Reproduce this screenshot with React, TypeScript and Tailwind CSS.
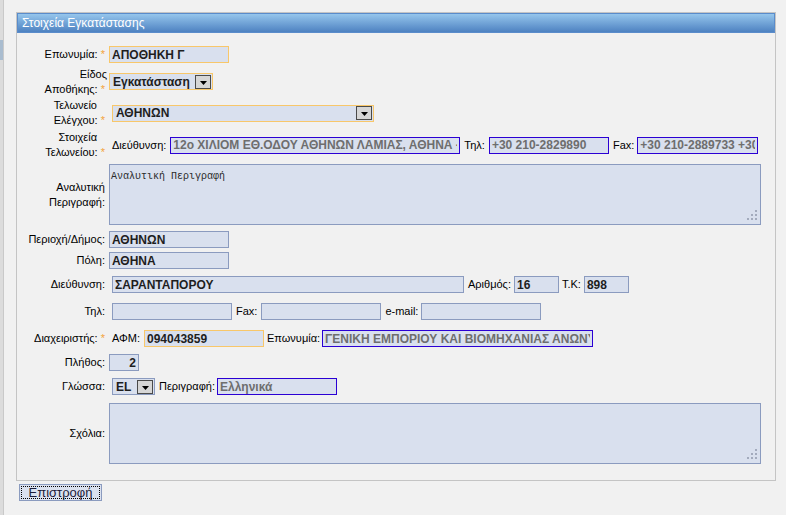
import clsx from "clsx"

type Tone = "gray" | "orange" | "blue"

const borders: Record<Tone, string> = {
  gray: "border-[#8b9bbf]",
  orange: "border-[#f8c76a]",
  blue: "border-[#2b00d4]",
}

function Star() {
  return <span className="text-[#f3a33b]"> *</span>
}

function Field({ w, value = "", tone = "gray", ro = false, right = false }: { w: string; value?: string; tone?: Tone; ro?: boolean; right?: boolean }) {
  return (
    <input
      readOnly
      value={value}
      className={clsx(
        "h-[17px] shrink-0 border bg-[#d9e0ee] px-[2px] text-[12px] font-bold outline-none",
        w,
        borders[tone],
        ro ? "text-[#6e6e6e]" : "text-[#1e1e1e]",
        right && "text-right"
      )}
    />
  )
}

function Arrow() {
  return (
    <div className="flex h-[14px] w-[16px] shrink-0 items-end justify-center border border-[#4a4a4a] bg-[#d6d6d6] pb-[3px]">
      <svg width="7" height="4" viewBox="0 0 7 4">
        <path d="M0 0h7L3.5 4z" fill="#000" />
      </svg>
    </div>
  )
}

function Select({ w, value, tone = "gray" }: { w: string; value: string; tone?: Tone }) {
  return (
    <div className={clsx("flex h-[17px] shrink-0 items-center justify-between border bg-[#d9e0ee] pl-[3px] pr-[1px]", w, borders[tone])}>
      <span className="text-[12px] font-bold text-[#1e1e1e]">{value}</span>
      <Arrow />
    </div>
  )
}

function Grip() {
  return (
    <svg className="absolute bottom-[3px] right-[2px]" width="11" height="11" viewBox="0 0 11 11">
      {[
        [8, 0],
        [4, 4],
        [8, 4],
        [0, 8],
        [4, 8],
        [8, 8],
      ].map(([x, y], i) => (
        <rect key={i} x={x} y={y} width="2" height="2" fill="#a3abbd" />
      ))}
    </svg>
  )
}

function Area({ text }: { text?: string }) {
  return (
    <div className="relative h-[61px] w-[652px] shrink-0 border border-[#8b9bbf] bg-[#d9e0ee] px-[1px] pt-[2px]">
      {text && <span className="font-['Liberation_Mono',monospace] text-[10px] leading-[12px] text-[#2a2a2a]">{text}</span>}
      <Grip />
    </div>
  )
}

function Label({ children }: { children: React.ReactNode }) {
  return <div className="w-[88px] shrink-0 text-right leading-[15px]">{children}</div>
}

export default function App() {
  return (
    <div className="flex min-h-[515px] bg-[#f1f1f1] font-['Liberation_Sans',Arial,sans-serif] text-[11px] text-black">
      {/* edge of the window behind */}
      <div className="flex w-[4px] shrink-0 flex-col border-r border-[#c9c9c9] bg-[#dcdcdc]">
        <div className="mt-[40px] h-[20px] bg-[#a9bccf]" />
      </div>

      <div className="flex flex-col">
        <div className="ml-[12px] mt-[12px] flex h-[469px] w-[760px] flex-col border border-[#c4c4c4]">
          <div className="flex h-[20px] items-center border border-[#5a8ccb] bg-linear-to-b from-[#96c6ec] to-[#4e82c1] pl-[4px] text-[12px] text-white">
            Στοιχεία Εγκατάστασης
          </div>

          <div className="flex flex-col">
            <div className="mt-[13px] flex h-[17px] items-center gap-[4px]">
              <Label>
                Επωνυμία:<Star />
              </Label>
              <Field w="w-[120px]" value="ΑΠΟΘΗΚΗ Γ" tone="orange" />
            </div>

            <div className="mt-[3px] flex h-[31px] items-center gap-[4px]">
              <Label>
                <span className="-mr-[2px] block">Είδος</span>
                Αποθήκης:<Star />
              </Label>
              <Select w="w-[104px]" value="Εγκατάσταση" tone="orange" />
            </div>

            <div className="mt-[1px] flex h-[30px] items-center gap-[4px]">
              <Label>
                <span className="block pr-[8px]">Τελωνείο</span>
                Ελέγχου:<Star />
              </Label>
              <div className="ml-[3px]">
                <Select w="w-[262px]" value="ΑΘΗΝΩΝ" tone="orange" />
              </div>
            </div>

            <div className="mt-[2px] flex h-[30px] items-center gap-[4px]">
              <Label>
                <span className="block pr-[8px]">Στοιχεία</span>
                Τελωνείου:<Star />
              </Label>
              <div className="ml-[3px] flex items-center">
                <span>Διεύθυνση:</span>
                <div className="ml-[4px]">
                  <Field w="w-[290px]" value="12ο ΧΙΛΙΟΜ ΕΘ.ΟΔΟΥ ΑΘΗΝΩΝ ΛΑΜΙΑΣ, ΑΘΗΝΑ - ΛΑΜΙΑ" tone="blue" ro />
                </div>
                <span className="ml-[4px]">Τηλ:</span>
                <div className="ml-[4px]">
                  <Field w="w-[120px]" value="+30 210-2829890" tone="blue" ro />
                </div>
                <span className="ml-[4px]">Fax:</span>
                <div className="ml-[3px]">
                  <Field w="w-[121px]" value="+30 210-2889733 +30 210-2889734" tone="blue" ro />
                </div>
              </div>
            </div>

            <div className="mt-[4px] flex h-[61px] items-center gap-[4px]">
              <Label>
                Αναλυτική
                <br />
                Περιγραφή:
              </Label>
              <Area text="Αναλυτική Περιγραφή" />
            </div>

            <div className="mt-[6px] flex h-[17px] items-center gap-[4px]">
              <Label>Περιοχή/Δήμος:</Label>
              <Field w="w-[120px]" value="ΑΘΗΝΩΝ" />
            </div>

            <div className="mt-[4px] flex h-[17px] items-center gap-[4px]">
              <Label>Πόλη:</Label>
              <Field w="w-[120px]" value="ΑΘΗΝΑ" />
            </div>

            <div className="mt-[7px] flex h-[17px] items-center gap-[4px]">
              <Label>Διεύθυνση:</Label>
              <div className="ml-[3px] flex items-center">
                <Field w="w-[352px]" value="ΣΑΡΑΝΤΑΠΟΡΟΥ" />
                <span className="ml-[4px]">Αριθμός:</span>
                <div className="ml-[3px]">
                  <Field w="w-[45px]" value="16" />
                </div>
                <span className="ml-[3px]">Τ.Κ:</span>
                <div className="ml-[3px]">
                  <Field w="w-[45px]" value="898" />
                </div>
              </div>
            </div>

            <div className="mt-[10px] flex h-[17px] items-center gap-[4px]">
              <Label>Τηλ:</Label>
              <div className="ml-[3px] flex items-center">
                <Field w="w-[120px]" />
                <span className="ml-[4px]">Fax:</span>
                <div className="ml-[4px]">
                  <Field w="w-[120px]" />
                </div>
                <span className="ml-[4px]">e-mail:</span>
                <div className="ml-[3px]">
                  <Field w="w-[120px]" />
                </div>
              </div>
            </div>

            <div className="mt-[10px] flex h-[17px] items-center gap-[4px]">
              <Label>
                Διαχειριστής:<Star />
              </Label>
              <div className="ml-[3px] flex items-center">
                <span>ΑΦΜ:</span>
                <div className="ml-[4px]">
                  <Field w="w-[120px]" value="094043859" tone="orange" />
                </div>
                <span className="ml-[3px]">Επωνυμία:</span>
                <div className="ml-[2px]">
                  <Field w="w-[271px]" value="ΓΕΝΙΚΗ ΕΜΠΟΡΙΟΥ ΚΑΙ ΒΙΟΜΗΧΑΝΙΑΣ ΑΝΩΝΥΜΗ ΕΤΑΙΡΕΙΑ" tone="blue" ro />
                </div>
              </div>
            </div>

            <div className="mt-[7px] flex h-[17px] items-center gap-[4px]">
              <Label>Πλήθος:</Label>
              <Field w="w-[30px]" value="2" right />
            </div>

            <div className="mt-[7px] flex h-[17px] items-center gap-[4px]">
              <Label>Γλώσσα:</Label>
              <div className="ml-[3px] flex items-center">
                <Select w="w-[43px]" value="EL" />
                <span className="ml-[4px]">Περιγραφή:</span>
                <div className="ml-[2px]">
                  <Field w="w-[120px]" value="Ελληνικά" tone="blue" ro />
                </div>
              </div>
            </div>

            <div className="mt-[8px] flex h-[61px] items-center gap-[4px]">
              <Label>Σχόλια:</Label>
              <Area />
            </div>
          </div>
        </div>

        <button className="ml-[15px] mt-[3px] h-[17px] w-[83px] border border-[#8b9bbf] bg-[#dbe1ef] text-[13px] leading-none text-[#1c1c3a] outline-1 outline-offset-[-3px] outline-black outline-dotted">
          Επιστροφή
        </button>
      </div>
    </div>
  )
}
